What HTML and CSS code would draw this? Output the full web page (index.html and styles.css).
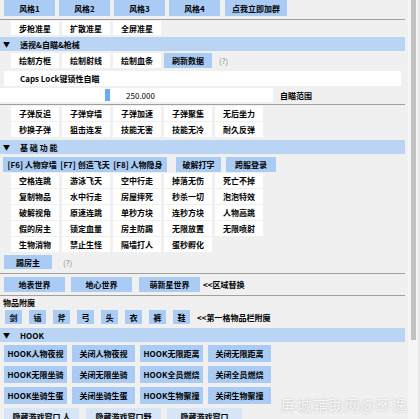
FILE: index.html
```html
<!DOCTYPE html>
<html lang="zh">
<head>
    <meta charset="UTF-8">
    <title>辅助菜单</title>
    <link rel="stylesheet" href="styles.css">
</head>
<body>
    <div class="window">
        <div class="content">
            <div class="row r-top">
                <div class="btn on w51">风格1</div>
                <div class="btn on w51">风格2</div>
                <div class="btn on w51">风格3</div>
                <div class="btn on w51">风格4</div>
                <div class="btn on w62 ml1">点我立即加群</div>
            </div>
            <div class="sep mt3"></div>
            <div class="grid5 mt1 h14">
                <div class="btn">步枪准星</div>
                <div class="btn">扩散准星</div>
                <div class="btn">全屏准星</div>
            </div>

            <div class="header mt2"><span class="arrow">▼</span>透视&amp;自瞄&amp;枪械</div>
            <div class="grid5 mt2 h15">
                <div class="btn">绘制方框</div>
                <div class="btn">绘制射线</div>
                <div class="btn">绘制血条</div>
                <div class="btn on">刷新数据</div>
                <div class="hint">(?)</div>
            </div>
            <div class="row mt3 h15">
                <div class="btn wide">Caps Lock键锁性自瞄</div>
            </div>
            <div class="row mt2 h14">
                <div class="slider">
                    <div class="grab"></div>
                    <span class="value">250.000</span>
                </div>
                <span class="label">自瞄范围</span>
            </div>
            <div class="sep mt2"></div>
            <div class="grid5 mt1 h15">
                <div class="btn">子弹反追</div>
                <div class="btn">子弹穿墙</div>
                <div class="btn">子弹加速</div>
                <div class="btn">子弹聚集</div>
                <div class="btn">无后坐力</div>
            </div>
            <div class="grid5 mt1 h15">
                <div class="btn">秒换子弹</div>
                <div class="btn">狙击连发</div>
                <div class="btn">技能无害</div>
                <div class="btn">技能无冷</div>
                <div class="btn">耐久反弹</div>
            </div>

            <div class="header mt3"><span class="arrow">▼</span>基 础 功 能</div>
            <div class="row mt3 h15">
                <div class="btn on keys">[F6] 人物穿墙&nbsp; [F7] 创造飞天&nbsp; [F8] 人物隐身</div>
                <div class="btn on w45 ml9">破解打字</div>
                <div class="btn on w50 ml5">跨服登录</div>
            </div>
            <div class="grid5 mt1 h15">
                <div class="btn">空格连跳</div>
                <div class="btn">游泳飞天</div>
                <div class="btn">空中行走</div>
                <div class="btn">掉落无伤</div>
                <div class="btn">死亡不掉</div>
            </div>
            <div class="grid5 mt1 h15">
                <div class="btn">复制物品</div>
                <div class="btn">水中行走</div>
                <div class="btn">房屋摔死</div>
                <div class="btn">秒杀一切</div>
                <div class="btn">泡泡特效</div>
            </div>
            <div class="grid5 mt1 h15">
                <div class="btn">破解视角</div>
                <div class="btn">原速连跳</div>
                <div class="btn">单秒方块</div>
                <div class="btn">连秒方块</div>
                <div class="btn">人物高跳</div>
            </div>
            <div class="grid5 mt1 h15">
                <div class="btn">假的房主</div>
                <div class="btn">锁定血量</div>
                <div class="btn">房主防踢</div>
                <div class="btn">无限放置</div>
                <div class="btn">无限喷射</div>
            </div>
            <div class="grid5 mt1 h15">
                <div class="btn">生物消物</div>
                <div class="btn">禁止生怪</div>
                <div class="btn">隔墙打人</div>
                <div class="btn">蛋秒孵化</div>
            </div>
            <div class="row mt3 h14">
                <div class="btn on w48">踢房主</div>
                <span class="hint ml7">(?)</span>
            </div>
            <div class="sep mt4"></div>
            <div class="row mt3 h15">
                <div class="btn on w61">地表世界</div>
                <div class="btn on w61 ml6">地心世界</div>
                <div class="btn on w61 ml7">萌新星世界</div>
                <span class="label ml3">&lt;&lt;区域替换</span>
            </div>
            <div class="sep mt3"></div>
            <div class="caption mt1">物品附魔</div>
            <div class="row mt2 h14 enchant">
                <div class="btn on">剑</div>
                <div class="btn on">镐</div>
                <div class="btn on">斧</div>
                <div class="btn on">弓</div>
                <div class="btn on">头</div>
                <div class="btn on">衣</div>
                <div class="btn on">裤</div>
                <div class="btn on">鞋</div>
                <span class="label">&lt;&lt;第一格物品栏附魔</span>
            </div>

            <div class="header mt4"><span class="arrow">▼</span>HOOK</div>
            <div class="grid4 mt3">
                <div class="btn on">HOOK人物夜视</div>
                <div class="btn on">关闭人物夜视</div>
                <div class="btn on">HOOK无限距离</div>
                <div class="btn on">关闭无限距离</div>
                <div class="btn on">HOOK无限坐骑</div>
                <div class="btn on">关闭无限坐骑</div>
                <div class="btn on">HOOK全员燃烧</div>
                <div class="btn on">关闭全员燃烧</div>
                <div class="btn on">HOOK坐骑生蛋</div>
                <div class="btn on">关闭坐骑生蛋</div>
                <div class="btn on">HOOK生物聚撞</div>
                <div class="btn on">关闭生物聚撞</div>
            </div>
            <div class="row mt4 h17 last">
                <div class="btn pale w75">隐藏游戏窗口 人</div>
                <div class="btn pale w75 ml7">隐藏游戏窗口野</div>
                <div class="btn pale w75 ml6">隐藏游戏窗口</div>
            </div>
        </div>
        <div class="scrollbar"><div class="thumb"></div></div>
        <div class="edge"></div>
    </div>
    <div class="watermark">屏城辅助网@环逸</div>
</body>
</html>
```

FILE: styles.css
```css
* {
    box-sizing: border-box;
}
body {
    margin: 0;
    background-color: #f0f0f0;
    font-family: "Noto Sans CJK SC", "Noto Sans", sans-serif;
    font-size: 8px;
    font-weight: 700;
    color: #000;
    overflow: hidden;
    height: 419px;
    position: relative;
}
.window {
    display: flex;
    height: 419px;
}
.content {
    width: 405px;
    flex: none;
}
.row {
    display: flex;
    align-items: center;
    padding-left: 4px;
}
.grid5 {
    display: grid;
    grid-template-columns: repeat(5, 48px) auto;
    column-gap: 3px;
    padding-left: 11px;
    align-items: center;
}
.grid4 {
    display: grid;
    grid-template-columns: repeat(4, 63px);
    grid-auto-rows: 17px;
    column-gap: 5px;
    row-gap: 4px;
    padding-left: 4px;
}
.h14 { height: 14px; }
.h15 { height: 15px; }
.h17 { height: 17px; }
.r-top { height: 16px; gap: 4px; }
.mt1 { margin-top: 1px; }
.mt2 { margin-top: 2px; }
.mt3 { margin-top: 3px; }
.mt4 { margin-top: 4px; }
.ml1 { margin-left: 1px; }
.ml3 { margin-left: 3px; }
.ml5 { margin-left: 5px; }
.ml6 { margin-left: 6px; }
.ml7 { margin-left: 7px; }
.ml9 { margin-left: 9px; }

.btn {
    height: 100%;
    display: flex;
    align-items: center;
    justify-content: center;
    background-color: #ffffff;
    white-space: nowrap;
}
.btn.on {
    background-color: #aaccf4;
}
.btn.pale {
    background-color: #d6e6f8;
}
.w45 { width: 45px; }
.w48 { width: 48px; }
.w50 { width: 50px; }
.w51 { width: 51px; }
.w61 { width: 61px; }
.w62 { width: 62px; }
.w75 { width: 75px; }
.wide {
    width: 100%;
    justify-content: flex-start;
    padding-left: 16px;
    margin-right: 4px;
}
.keys {
    width: 164px;
    margin-left: -1px;
}
.hint {
    color: #8c8c8c;
    font-weight: 400;
    padding-left: 4px;
}
.label {
    white-space: nowrap;
}
.sep {
    height: 1px;
    background-color: #a0a0a0;
}
.header {
    height: 14px;
    display: flex;
    align-items: center;
    background-color: #bad4f3;
}
.arrow {
    font-size: 7px;
    width: 20px;
    padding-left: 3px;
}
.slider {
    position: relative;
    width: 273px;
    height: 100%;
    margin-left: -4px;
    background-color: #ffffff;
    display: flex;
    align-items: center;
    justify-content: center;
}
.grab {
    position: absolute;
    left: 105px;
    top: 1px;
    width: 5px;
    height: 12px;
    background-color: #68aaf8;
}
.value {
    font-weight: 400;
    padding-left: 8px;
}
.slider + .label {
    margin-left: 7px;
}
.caption {
    height: 11px;
    line-height: 11px;
    padding-left: 3px;
}
.enchant {
    gap: 5px;
    padding-left: 5px;
}
.enchant .btn {
    width: 17px;
    margin-right: 2px;
}
.enchant .label {
    margin-left: 0;
}
.scrollbar {
    width: 10px;
    margin-left: 3px;
    background-color: #f5f5f5;
    padding: 0 1px;
}
.thumb {
    height: 340px;
    margin-left: 2px;
    width: 5px;
    background-color: #c2c2c2;
}
.edge {
    flex: 1;
    background-color: #e6e6e6;
}
.watermark {
    position: absolute;
    right: 12px;
    bottom: 4px;
    font-size: 15px;
    font-weight: 400;
    letter-spacing: 1px;
    color: rgba(255, 255, 255, 0.85);
    text-shadow: 0 0 2px rgba(0, 0, 0, 0.25);
}
```
